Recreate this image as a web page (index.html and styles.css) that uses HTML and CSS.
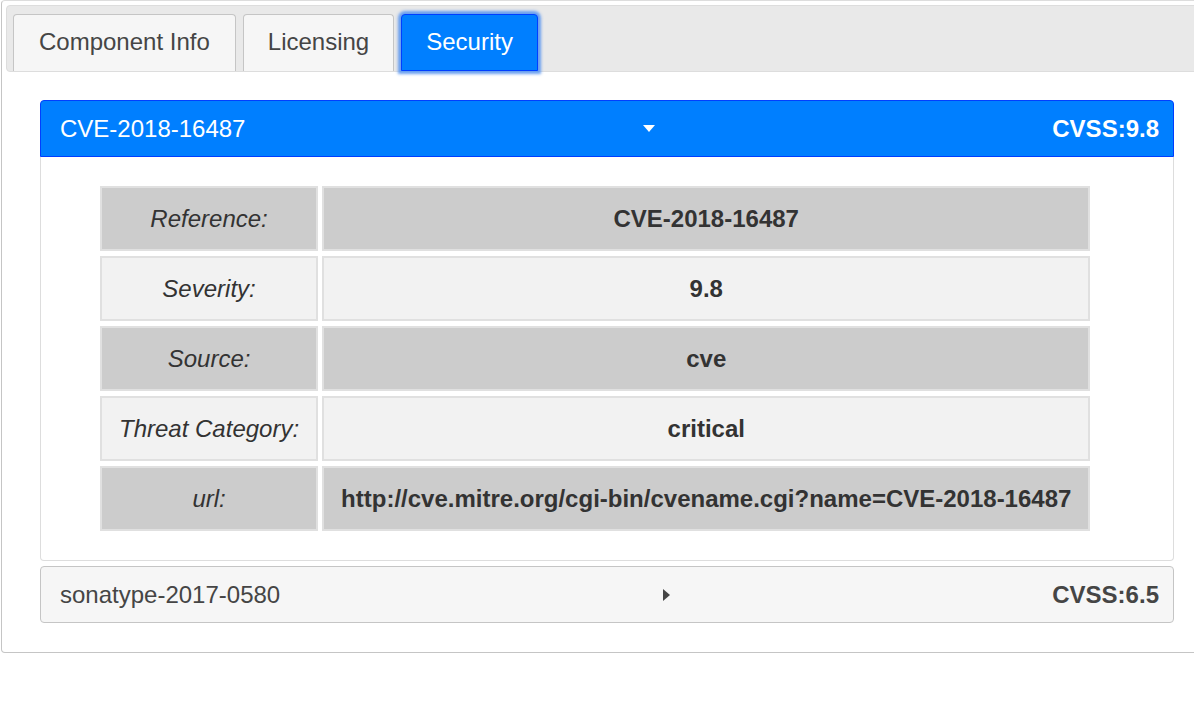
FILE: index.html
```html
<!DOCTYPE html>
<html>
<head>
<meta charset="utf-8">
<link rel="stylesheet" href="styles.css">
</head>
<body>
<div class="tabs">
  <ul class="tab-nav">
    <li class="tab">Component Info</li>
    <li class="tab">Licensing</li>
    <li class="tab active">Security</li>
  </ul>
  <div class="tab-panel">
    <div class="acc-header open">
      <span class="acc-title">CVE-2018-16487</span>
      <svg class="acc-icon" width="12" height="7" viewBox="0 0 12 7"><polygon points="0,0 12,0 6,7" fill="#ffffff"/></svg>
      <span class="acc-score">CVSS:9.8</span>
    </div>
    <div class="acc-body">
      <table class="details">
        <tr class="dark"><td class="label">Reference:</td><td class="value">CVE-2018-16487</td></tr>
        <tr class="light"><td class="label">Severity:</td><td class="value">9.8</td></tr>
        <tr class="dark"><td class="label">Source:</td><td class="value">cve</td></tr>
        <tr class="light"><td class="label">Threat Category:</td><td class="value">critical</td></tr>
        <tr class="dark"><td class="label">url:</td><td class="value">http://cve.mitre.org/cgi-bin/cvename.cgi?name=CVE-2018-16487</td></tr>
      </table>
    </div>
    <div class="acc-header closed">
      <span class="acc-title">sonatype-2017-0580</span>
      <svg class="acc-icon" width="7" height="12" viewBox="0 0 7 12"><polygon points="0,0 7,6 0,12" fill="#454545"/></svg>
      <span class="acc-score">CVSS:6.5</span>
    </div>
  </div>
</div>
</body>
</html>
```
FILE: styles.css
```css
html, body {
  margin: 0;
  padding: 0;
  overflow: hidden;
  background: #ffffff;
}

body {
  font-family: "Liberation Sans", Arial, Helvetica, sans-serif;
  font-size: 24px;
  color: #333333;
}

.tabs {
  margin-left: 1px;
  width: 1202px;
  border: 1px solid #c5c5c5;
  border-top-color: #dddddd;
  border-radius: 4px;
  padding: 4px;
  background: #ffffff;
}

.tab-nav {
  list-style: none;
  margin: 0;
  padding: 8px 6px 0;
  display: flex;
  gap: 7px;
  background: #e9e9e9;
  border: 1px solid #dddddd;
  border-radius: 4px;
}

.tab {
  height: 56px;
  line-height: 54px;
  padding: 0 24px;
  border: 1px solid #c5c5c5;
  border-bottom: none;
  border-radius: 4px 4px 0 0;
  background: #f6f6f6;
  color: #454545;
  white-space: nowrap;
}

.tab:first-child {
  padding: 0 25px;
}

.tab.active {
  background: #007fff;
  border-color: #003eff;
  color: #ffffff;
  border-bottom: 1px solid #003eff;
  height: 55px;
  line-height: 54px;
  box-shadow: 0 0 3px 3px rgba(90, 150, 240, 0.9);
}

.tab-panel {
  padding: 28px 34px 25px 34px;
}

.acc-header {
  height: 55px;
  display: flex;
  align-items: center;
  justify-content: space-between;
  padding: 0 14px 0 19px;
  border: 1px solid #c5c5c5;
  border-radius: 4px;
  background: #f6f6f6;
  color: #454545;
}

.acc-header.open {
  background: #007fff;
  border-color: #003eff;
  color: #ffffff;
  border-radius: 4px 4px 0 0;
}

.acc-header.closed {
  margin-top: 5px;
}

.acc-score {
  font-weight: bold;
}

.acc-icon {
  display: block;
}

.acc-body {
  border: 1px solid #dddddd;
  border-top: none;
  border-radius: 0 0 4px 4px;
  padding: 24px 55px 24px 55px;
}

.details {
  border-collapse: separate;
  border-spacing: 4px 5px;
}

.details td {
  border: 2px solid #e0e0e0;
  padding: 17px 17px;
  line-height: 27px;
  text-align: center;
  white-space: nowrap;
}

.details tr.dark td {
  background: #cccccc;
}

.details tr.light td {
  background: #f2f2f2;
}

.details td.label {
  font-style: italic;
  width: 180px;
}

.details td.value {
  font-weight: bold;
}
```
